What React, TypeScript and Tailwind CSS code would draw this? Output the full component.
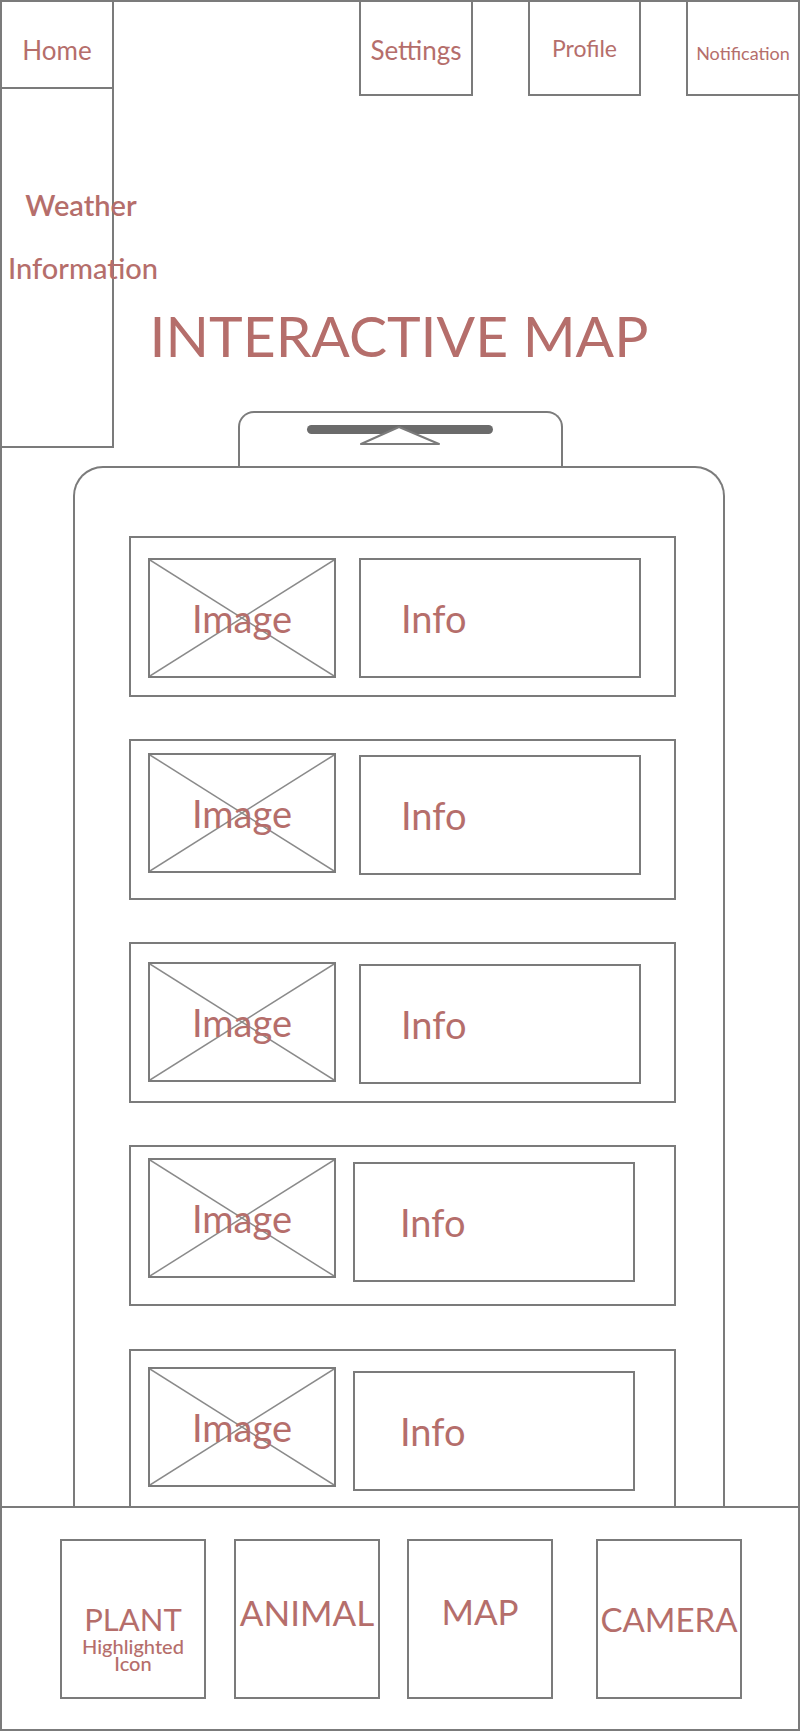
const cards = [
  { mt: '', imgMt: 'mt-[20px]', infoMt: 'mt-[20px]', infoMl: 'ml-[23px]', infoPl: 'pl-[40px]' },
  { mt: 'mt-[42px]', imgMt: 'mt-[12px]', infoMt: 'mt-[14px]', infoMl: 'ml-[23px]', infoPl: 'pl-[40px]' },
  { mt: 'mt-[42px]', imgMt: 'mt-[18px]', infoMt: 'mt-[20px]', infoMl: 'ml-[23px]', infoPl: 'pl-[40px]' },
  { mt: 'mt-[42px]', imgMt: 'mt-[11px]', infoMt: 'mt-[15px]', infoMl: 'ml-[17px]', infoPl: 'pl-[45px]' },
  { mt: 'mt-[43px]', imgMt: 'mt-[16px]', infoMt: 'mt-[20px]', infoMl: 'ml-[17px]', infoPl: 'pl-[45px]' },
]

function ImageBox({ className }: { className: string }) {
  return (
    <div className={`relative w-[188px] h-[120px] border-2 border-[#7b7b7b] flex items-center justify-center shrink-0 ${className}`}>
      {/* placeholder cross */}
      <svg className="absolute inset-0 w-full h-full" viewBox="0 0 100 100" preserveAspectRatio="none">
        <line x1="0" y1="0" x2="100" y2="100" stroke="#8a8a8a" strokeWidth="1.5" vectorEffect="non-scaling-stroke" />
        <line x1="100" y1="0" x2="0" y2="100" stroke="#8a8a8a" strokeWidth="1.5" vectorEffect="non-scaling-stroke" />
      </svg>
      <span className="relative text-[38px] leading-none">Image</span>
    </div>
  )
}

export default function App() {
  return (
    <div className="w-[800px] h-[1731px] border-2 border-[#7b7b7b] bg-white flex flex-col overflow-hidden font-['Lato',sans-serif] text-[#b56e6b]">
      {/* Top area */}
      <div className="h-[464px] flex shrink-0">
        <div className="w-[112px] shrink-0 flex flex-col">
          <div className="h-[87px] border-r-2 border-b-2 border-[#7b7b7b] pt-[35px] text-center text-[26px] leading-none">Home</div>
          <div className="h-[359px] border-r-2 border-b-2 border-[#7b7b7b] pt-[84px]">
            <div className="w-[150px] ml-[6px] text-center text-[29px] font-semibold">
              <div className="h-[63px] leading-[63px] pr-[4px]">Weather</div>
              <div className="h-[63px] leading-[63px] font-medium">Information</div>
            </div>
          </div>
        </div>

        <div className="flex-1 flex flex-col">
          {/* Nav */}
          <div className="h-[94px] flex">
            <div className="ml-[245px] w-[114px] border-x-2 border-b-2 border-[#7b7b7b] pt-[35px] text-center text-[26px] leading-none">Settings</div>
            <div className="ml-[55px] w-[113px] border-x-2 border-b-2 border-[#7b7b7b] pt-[35px] text-center text-[23px] leading-none">Profile</div>
            <div className="ml-[45px] flex-1 border-l-2 border-b-2 border-[#7b7b7b] pt-[42px] text-center text-[18px] leading-none">Notification</div>
          </div>

          <h1 className="mt-[211px] pr-[114px] text-center text-[57px] leading-none whitespace-nowrap">INTERACTIVE MAP</h1>

          {/* Drag handle */}
          <div className="mt-[47px] ml-[124px] w-[325px] h-[55px] border-2 border-b-0 border-[#7b7b7b] rounded-t-[16px]">
            <svg width="321" height="53" viewBox="0 0 321 53">
              <rect x="67" y="12" width="186" height="9" rx="4.5" fill="#6b6b6b" />
              <polygon points="159,14 121,31 199,31" fill="#fff" stroke="#7b7b7b" strokeWidth="2" strokeLinejoin="round" />
            </svg>
          </div>
        </div>
      </div>

      {/* Card panel */}
      <div className="h-[1040px] shrink-0 ml-[71px] w-[652px] border-2 border-b-0 border-[#7b7b7b] rounded-t-[30px] overflow-hidden pt-[68px] pl-[54px]">
        {cards.map((c, i) => (
          <div key={i} className={`w-[547px] h-[161px] shrink-0 border-2 border-[#7b7b7b] flex items-start ${c.mt}`}>
            <ImageBox className={`ml-[17px] ${c.imgMt}`} />
            <div className={`w-[282px] h-[120px] border-2 border-[#7b7b7b] flex items-center text-[38px] leading-none ${c.infoMt} ${c.infoMl} ${c.infoPl}`}>
              Info
            </div>
          </div>
        ))}
      </div>

      {/* Bottom nav */}
      <div className="flex-1 border-t-2 border-[#7b7b7b] pt-[31px] flex items-start">
        <div className="ml-[58px] w-[146px] h-[160px] border-2 border-[#7b7b7b] pt-[63px] text-center">
          <div className="text-[31px] leading-none">PLANT</div>
          <div className="mt-[3px] text-[20px] leading-[17px] font-medium">
            <div>Highlighted</div>
            <div>Icon</div>
          </div>
        </div>
        <div className="ml-[28px] w-[146px] h-[160px] border-2 border-[#7b7b7b] pt-[54px] text-center text-[35px] leading-none">ANIMAL</div>
        <div className="ml-[27px] w-[146px] h-[160px] border-2 border-[#7b7b7b] pt-[53px] text-center text-[35px] leading-none">MAP</div>
        <div className="ml-[43px] w-[146px] h-[160px] border-2 border-[#7b7b7b] pt-[62px] text-center text-[33px] leading-none whitespace-nowrap">CAMERA</div>
      </div>
    </div>
  )
}
